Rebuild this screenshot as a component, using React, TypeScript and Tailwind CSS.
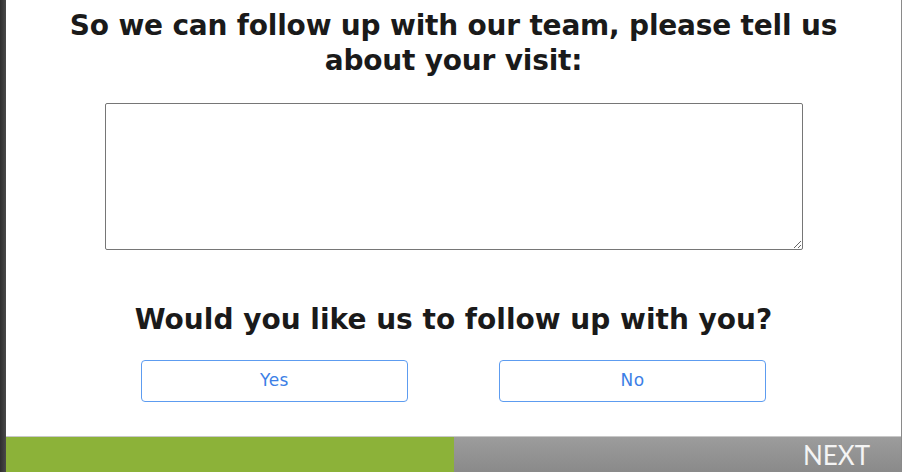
export default function App() {
  return (
    <div className="flex h-[472px] w-[902px] overflow-hidden bg-[#3b3b3b]">
      {/* dark backdrop edge */}
      <div className="w-[6px] shrink-0 bg-gradient-to-r from-[#2e2e2e] to-[#4a4a4a]" />

      <div className="flex flex-1 flex-col border-r border-[#8a8a8a] bg-white">
        <div className="flex flex-1 flex-col items-center pt-[8px]">
          {/* Question 1 */}
          <h1 className="text-center font-['DejaVu_Sans',sans-serif] text-[28px] font-bold leading-[35px] tracking-[-0.2px] text-[#1a1a1a]">
            So we can follow up with our team, please tell us
            <br />
            about your visit:
          </h1>

          <textarea className="mt-[25px] h-[147px] w-[698px] resize rounded-[2px] border border-[#767676] bg-white p-2 font-['Inter',sans-serif] text-sm outline-none" />

          {/* Question 2 */}
          <h2 className="mt-[52px] text-center font-['DejaVu_Sans',sans-serif] text-[28px] font-bold leading-[35px] text-[#1a1a1a]">
            Would you like us to follow up with you?
          </h2>

          <div className="mt-[23px] flex gap-[91px]">
            <button className="h-[42px] w-[267px] rounded-[4px] border border-[#5d9cf0] bg-white font-['DejaVu_Sans',sans-serif] text-[17px] tracking-[0.5px] text-[#3d7fe6]">
              Yes
            </button>
            <button className="h-[42px] w-[267px] rounded-[4px] border border-[#5d9cf0] bg-white font-['DejaVu_Sans',sans-serif] text-[17px] tracking-[0.5px] text-[#3d7fe6]">
              No
            </button>
          </div>
        </div>

        {/* Progress + next */}
        <div className="flex h-[36px] border-t border-[#c8c8c8]">
          <div className="w-[448px] bg-[#8cb239]" />
          <div className="flex flex-1 items-center justify-end bg-gradient-to-b from-[#9c9c9c] to-[#8a8a8a] pr-[31px]">
            <span className="font-['Lato',sans-serif] text-[26px] leading-none text-[#f4f4f4]">NEXT</span>
          </div>
        </div>
      </div>
    </div>
  );
}
